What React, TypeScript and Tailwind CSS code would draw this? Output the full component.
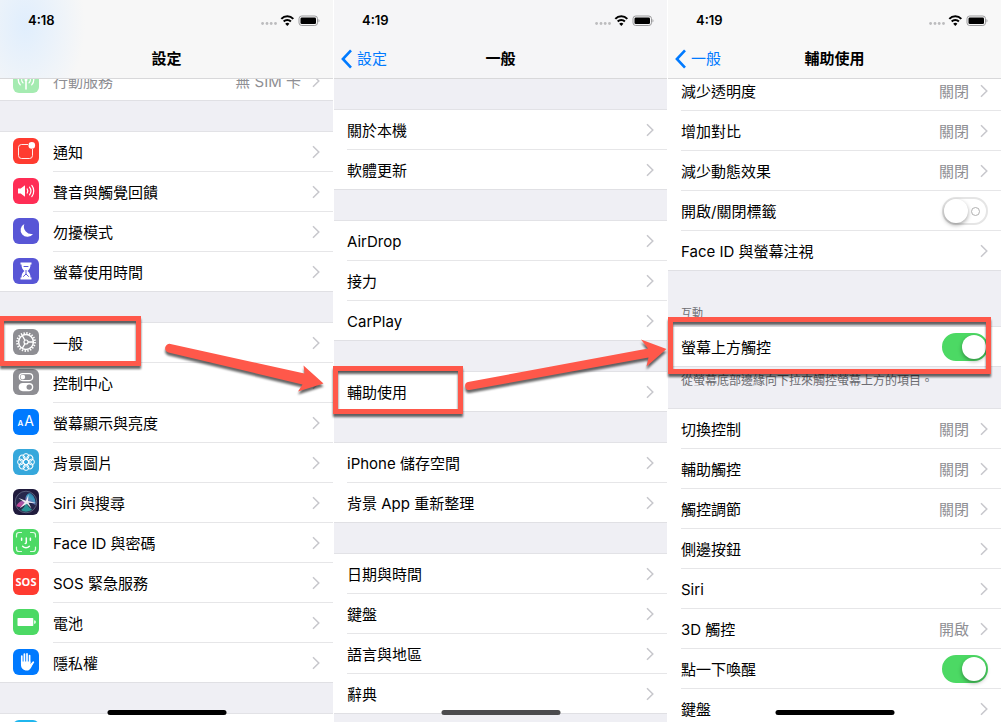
import type { ReactNode } from "react";

type Item = {
  label: string;
  value?: string;
  icon?: ReactNode;
  toggle?: boolean;
  muted?: boolean;
};

const tile = "mb-0.5 size-[26px] shrink-0 rounded-[6px] overflow-hidden text-white";

function Tile({ bg, children }: { bg: string; children?: ReactNode }) {
  return (
    <svg viewBox="0 0 26 26" className={`${tile} ${bg}`} fill="none" stroke="currentColor" aria-hidden="true">
      {children}
    </svg>
  );
}

const CellularIcon = (
  <Tile bg="bg-[#a5ebb1]">
    <g strokeWidth="1.3" strokeLinecap="round">
      <path d="M13 13v9" strokeWidth="1.6" />
      <path d="M10 9.5a4.6 4.6 0 0 0 0 6.4M16 9.5a4.6 4.6 0 0 1 0 6.4M7.3 7.5a7.6 7.6 0 0 0 0 10.4M18.7 7.5a7.6 7.6 0 0 1 0 10.4" />
    </g>
    <circle cx="13" cy="12.7" r="1.5" fill="currentColor" stroke="none" />
  </Tile>
);

const NotificationsIcon = (
  <Tile bg="bg-[#ff3b30]">
    <path d="M15 6.500H8.500a3 3 0 0 0-3 3v8a3 3 0 0 0 3 3h8a3 3 0 0 0 3-3V11" strokeWidth="0.9" />
    <circle cx="18.8" cy="7.4" r="3.3" fill="currentColor" stroke="none" />
  </Tile>
);

const SoundsIcon = (
  <Tile bg="bg-[#ff2d55]">
    <path d="M5 10.5h2.7l4.3-3.3v11.6l-4.3-3.3H5z" fill="currentColor" stroke="none" />
    <g strokeWidth="1.2" strokeLinecap="round">
      <path d="M14.200 11a3.6 3.6 0 0 1 0 4M16.500 9.200a6.2 6.2 0 0 1 0 7.600M18.800 7.400a9 9 0 0 1 0 11.200" />
    </g>
  </Tile>
);

const MoonIcon = (
  <Tile bg="bg-[#5856d6]">
    <path d="M11.300 6a6.8 6.8 0 1 0 8.700 9.900A7.600 7.600 0 0 1 11.300 6z" fill="currentColor" stroke="none" />
  </Tile>
);

const HourglassIcon = (
  <Tile bg="bg-[#5856d6]">
    <path d="M7.500 4.500h11v2h-1c0 3-.8 4.800-3 6.500 2.200 1.700 3 3.500 3 6.500h1v2h-11v-2h1c0-3 .8-4.800 3-6.500-2.200-1.700-3-3.500-3-6.500h-1z" fill="currentColor" stroke="none" />
    <path d="M10.600 8.500h4.800M13 12v4M10.200 18.700 13 16l2.800 2.700" stroke="#5856d6" strokeWidth="1" />
  </Tile>
);

const GearIcon = (
  <Tile bg="bg-[#8e8e93]">
    <circle cx="13" cy="13" r="9" strokeWidth="1.8" strokeDasharray="1.4 1.427" />
    <circle cx="13" cy="13" r="7.4" strokeWidth="1.5" />
    <circle cx="13" cy="13" r="2" strokeWidth="1.200" />
    <path d="M15 13h5.200M12 11.300 9.300 6.700M12 14.700l-2.700 4.600" strokeWidth="1.300" />
  </Tile>
);

const ControlCenterIcon = (
  <Tile bg="bg-[#8e8e93]">
    <rect x="6.3" y="4.600" width="13.400" height="7" rx="3.500" strokeWidth="1.200" />
    <circle cx="9.800" cy="8.100" r="2.400" fill="currentColor" stroke="none" />
    <rect x="5.700" y="14" width="14.600" height="8.200" rx="4.100" fill="currentColor" stroke="none" />
    <circle cx="16.200" cy="18.100" r="2.700" fill="#8e8e93" stroke="none" />
  </Tile>
);

const DisplayIcon = (
  <Tile bg="bg-[#007aff]">
    <g fill="currentColor" stroke="none" fontFamily="Inter, sans-serif">
      <text x="4.500" y="17" fontSize="8" fontWeight="600">A</text>
      <text x="11.200" y="17" fontSize="14">A</text>
    </g>
  </Tile>
);

const WallpaperIcon = (
  <Tile bg="bg-[#36a8dc]">
    <g strokeWidth="1">
      {[0, 45, 90, 135, 180, 225, 270, 315].map((angle) => (
        <circle key={angle} cx="13" cy="7.500" r="2.900" transform={`rotate(${angle} 13 13)`} />
      ))}
      <circle cx="13" cy="13" r="2.600" />
    </g>
  </Tile>
);

const SiriIcon = (
  <Tile bg="bg-[#201b3d]">
    <defs>
      <linearGradient id="siri-wave" x1="0" y1="1" x2="1" y2="0">
        <stop offset="0" stopColor="#f0459a" />
        <stop offset="0.45" stopColor="#a56bc4" />
        <stop offset="0.7" stopColor="#3fb0d4" />
        <stop offset="1" stopColor="#1f6a9a" />
      </linearGradient>
    </defs>
    <circle cx="13" cy="13" r="10.800" fill="#27284c" stroke="#7c879f" strokeWidth="0.600" />
    <path d="M3.500 17C5 13 9 10.500 13 13 11.500 9 13 5 17 4c4 2 6 7 5.500 12-3-2-6-3-9.500-3-3 5-6 6-9.500 4z" fill="url(#siri-wave)" stroke="none" opacity="0.850" />
    <path d="M13 13c1 3 3 6 6 7.500-3 2.500-8 3-11 .5 3-2 4.500-5 5-8z" fill="#2cb8ac" stroke="none" opacity="0.750" />
    <path d="M5.500 9 13 11.800 15.500 5.500 15 12l8 2-7.500-.3 3 5.800-4.700-4.700L6.500 19.500l5.200-6z" fill="#fff" stroke="none" opacity="0.900" />
  </Tile>
);

const FaceIdIcon = (
  <Tile bg="bg-[#4cd964]">
    <g strokeWidth="1.200" strokeLinecap="round">
      <path d="M3.500 8V6a2.500 2.500 0 0 1 2.500-2.500h2.500M17.500 3.500H20A2.500 2.500 0 0 1 22.500 6v2M22.500 18v2a2.500 2.500 0 0 1-2.500 2.500h-2.500M8.500 22.500H6A2.500 2.500 0 0 1 3.500 20v-2" opacity="0.850" />
      <path d="M8.600 9.300v2M17.400 9.300v2M13.300 9v4.600c0 .7-.4 1-1.100 1M9.600 17.200c1.900 2 4.900 2 6.800 0" strokeWidth="1.500" />
    </g>
  </Tile>
);

const SosIcon = (
  <Tile bg="bg-[#ff3b30]">
    <text x="13" y="17" fontSize="11" fontWeight="700" textAnchor="middle" fill="currentColor" stroke="none" fontFamily="Open Sans, sans-serif">SOS</text>
  </Tile>
);

const BatteryIcon = (
  <Tile bg="bg-[#4cd964]">
    <g fill="currentColor" stroke="none">
      <rect x="4.500" y="9" width="15.800" height="8" rx="0.800" />
      <path d="M21.200 11.200c1.200 0 1.600 1 1.600 1.800s-.4 1.800-1.600 1.800z" />
    </g>
  </Tile>
);

const PrivacyIcon = (
  <Tile bg="bg-[#007aff]">
    <g strokeLinecap="round" strokeWidth="1.700">
      <path d="M8.800 7v7M11.400 5v8M14 4.800v8M16.600 6.600V14" />
      <path d="M17.500 16.500l2.700-3.200" strokeWidth="1.900" />
    </g>
    <path d="M7.950 12.500h9.500v3l1.500-1.200 1 .9c-1.700 2.800-2.700 6.300-6 6.300-4 0-6-2.500-6-6z" fill="currentColor" stroke="none" />
  </Tile>
);

const settingsTop: Item[] = [{ label: "行動服務", value: "無 SIM 卡", icon: CellularIcon, muted: true }];

const settingsAlerts: Item[] = [
  { label: "通知", icon: NotificationsIcon },
  { label: "聲音與觸覺回饋", icon: SoundsIcon },
  { label: "勿擾模式", icon: MoonIcon },
  { label: "螢幕使用時間", icon: HourglassIcon },
];

const settingsMain: Item[] = [
  { label: "一般", icon: GearIcon },
  { label: "控制中心", icon: ControlCenterIcon },
  { label: "螢幕顯示與亮度", icon: DisplayIcon },
  { label: "背景圖片", icon: WallpaperIcon },
  { label: "Siri 與搜尋", icon: SiriIcon },
  { label: "Face ID 與密碼", icon: FaceIdIcon },
  { label: "SOS 緊急服務", icon: SosIcon },
  { label: "電池", icon: BatteryIcon },
  { label: "隱私權", icon: PrivacyIcon },
];

const generalGroups: Item[][] = [
  [{ label: "關於本機" }, { label: "軟體更新" }],
  [{ label: "AirDrop" }, { label: "接力" }, { label: "CarPlay" }],
  [{ label: "輔助使用" }],
  [{ label: "iPhone 儲存空間" }, { label: "背景 App 重新整理" }],
  [{ label: "日期與時間" }, { label: "鍵盤" }, { label: "語言與地區" }, { label: "辭典" }],
];

const visionItems: Item[] = [
  { label: "減少透明度", value: "關閉" },
  { label: "增加對比", value: "關閉" },
  { label: "減少動態效果", value: "關閉" },
  { label: "開啟/關閉標籤", toggle: false },
  { label: "Face ID 與螢幕注視" },
];

const touchItems: Item[] = [
  { label: "切換控制", value: "關閉" },
  { label: "輔助觸控", value: "關閉" },
  { label: "觸控調節", value: "關閉" },
  { label: "側邊按鈕" },
  { label: "Siri" },
  { label: "3D 觸控", value: "開啟" },
  { label: "點一下喚醒", toggle: true },
  { label: "鍵盤" },
];

function Chevron() {
  return (
    <svg viewBox="0 0 8 14" className="h-[14px] w-2 shrink-0 text-[#c7c7cc]" fill="none" stroke="currentColor" strokeWidth="1.5" aria-hidden="true">
      <path d="M1 1.2 6.8 7 1 12.8" />
    </svg>
  );
}

function Toggle({ on }: { on: boolean }) {
  return (
    <input
      type="checkbox"
      role="switch"
      defaultChecked={on}
      className="relative h-7 w-[46px] shrink-0 appearance-none rounded-full border-2 border-[#e5e5e5] bg-white before:absolute before:top-0 before:left-0 before:size-6 before:rounded-full before:bg-white before:shadow-[0_2px_4px_rgba(0,0,0,0.35)] after:absolute after:top-2 after:right-1.5 after:size-[9px] after:rounded-full after:border after:border-[#b0b0b0] checked:border-[#4cd964] checked:bg-[#4cd964] checked:before:left-[18px] checked:after:hidden"
    />
  );
}

function Row({ item, last }: { item: Item; last: boolean }) {
  const line = `flex h-full min-w-0 flex-1 items-center border-b ${last ? "border-transparent" : "border-[#e6e6e8]"}`;

  if (item.toggle !== undefined) {
    return (
      <li className="h-10 pl-[13px]">
        <label className={`${line} pr-[13px]`}>
          <span className="flex-1 pt-0.5">{item.label}</span>
          <Toggle on={item.toggle} />
        </label>
      </li>
    );
  }

  return (
    <li className="h-10">
      <a href="#" className={`flex h-full items-center pl-[13px] ${item.icon ? "gap-[14px]" : ""}`}>
        {item.icon}
        <span className={`${line} gap-[11px] pr-[13px]`}>
          <span className={`flex-1 pt-0.5 ${item.muted ? "text-[#8e8e93]" : ""}`}>{item.label}</span>
          {item.value && <span className="pt-0.5 text-[#8e8e93]">{item.value}</span>}
          <Chevron />
        </span>
      </a>
    </li>
  );
}

function Group({ items }: { items: Item[] }) {
  return (
    <ul className="bg-white shadow-[0_-1px_0_#e2e2e6,inset_0_-1px_0_#e0e0e4]">
      {items.map((item, index) => (
        <Row key={item.label} item={item} last={index === items.length - 1} />
      ))}
    </ul>
  );
}

function StatusBar({ time }: { time: string }) {
  return (
    <div className="flex h-10 items-center justify-between pr-[13px] pl-7">
      <span className="text-[13px] font-semibold">{time}</span>
      <svg viewBox="0 0 60 14" className="h-[14px] w-[60px]" aria-hidden="true">
        <g fill="#bcbcbe">
          <circle cx="2.6" cy="10.500" r="1.400" />
          <circle cx="7" cy="10.500" r="1.400" />
          <circle cx="11.200" cy="10.500" r="1.400" />
          <circle cx="15.500" cy="10.500" r="1.400" />
        </g>
        <g fill="none" stroke="#000" strokeWidth="2">
          <path d="M21.300 5.900a8.200 8.200 0 0 1 12 0" />
          <path d="M23.700 8.500a4.900 4.900 0 0 1 7.200 0" />
        </g>
        <path d="M27.300 13 25.200 10.700a3.100 3.100 0 0 1 4.200 0z" />
        <rect x="39" y="3" width="18.500" height="9.500" rx="2.700" fill="none" stroke="#9b9b9d" />
        <rect x="40.500" y="4.500" width="15.500" height="6.500" rx="1.300" />
        <path d="M58.500 6c1.300.5 1.300 3 0 3.500z" fill="#9b9b9d" />
      </svg>
    </div>
  );
}

type ScreenProps = {
  time: string;
  title: string;
  back?: string;
  headerClass: string;
  indicatorClass: string;
  children: ReactNode;
};

function Screen({ time, title, back, headerClass, indicatorClass, children }: ScreenProps) {
  return (
    <section className="relative flex h-screen min-w-0 flex-col overflow-hidden bg-[#efeff4]">
      <header className={`relative z-10 h-[79px] shrink-0 border-b border-[#d8d8da] ${headerClass}`}>
        <StatusBar time={time} />
        <div className="grid h-[38px] grid-cols-[1fr_auto_1fr] items-center">
          {back ? (
            <a href="#" className="flex items-center gap-[5px] pl-[7px] text-[#007aff]">
              <svg viewBox="0 0 11 20" className="h-5 w-[11px]" fill="none" stroke="currentColor" strokeWidth="2.600" aria-hidden="true">
                <path d="M10 1.300 1.900 10 10 18.700" />
              </svg>
              {back}
            </a>
          ) : (
            <span />
          )}
          <h1 className="font-semibold">{title}</h1>
        </div>
      </header>
      <div className="flex min-h-0 flex-1 flex-col">{children}</div>
      <div className={`absolute bottom-[7px] left-1/2 h-[5px] w-[119px] -translate-x-1/2 rounded-full ${indicatorClass}`} />
    </section>
  );
}

// Boxes and arrows that walk through 一般 → 輔助使用 → 螢幕上方觸控
function Annotations() {
  return (
    <svg viewBox="0 0 1001 722" className="pointer-events-none absolute top-0 left-0 z-20 h-[722px] w-[1001px] drop-shadow-[0px_3px_1px_rgba(0,0,0,0.6)]" aria-hidden="true">
      <g fill="none" stroke="#ff584a" strokeWidth="5">
        <rect x="1.500" y="318.500" width="137" height="45" />
        <rect x="335.500" y="368.500" width="125" height="43" />
        <rect x="670.500" y="319.500" width="318" height="52" />
      </g>
      <g fill="#ff584a">
        <path d="M170.500 344 304.500 373.500 303.500 365.500 323.500 383.500 298 391.500 302.500 384.500 168.500 352.500A4.300 4.300 0 0 1 170.500 344z" />
        <path d="M468 382 648 348.500 641 339.500 666.500 349 646.500 366.500 648.500 357.500 469.500 390A4.100 4.100 0 0 1 468 382z" />
      </g>
    </svg>
  );
}

export default function App() {
  return (
    <main className="relative grid grid-cols-3 gap-px overflow-hidden bg-white font-[Inter,'Noto_Sans_CJK_TC',sans-serif] text-[15px] leading-5 text-black">
      <Screen
        time="4:18"
        title="設定"
        headerClass="bg-[#f7f7f7] bg-[radial-gradient(ellipse_60px_90px_at_25px_25px,#e0eefd,transparent)]"
        indicatorClass="bg-black"
      >
        <div className="-mt-[18px] flex flex-col gap-[31px]">
          <Group items={settingsTop} />
          <Group items={settingsAlerts} />
          <Group items={settingsMain} />
          <Group items={[{ label: "", icon: <Tile bg="bg-[#1fb6ee]" /> }]} />
        </div>
      </Screen>

      <Screen time="4:19" title="一般" back="設定" headerClass="bg-[#f5f5f7]" indicatorClass="bg-[#4b4b4d]">
        <div className="flex flex-col gap-[31px] pt-[31px]">
          {generalGroups.map((items) => (
            <Group key={items[0].label} items={items} />
          ))}
        </div>
      </Screen>

      <Screen time="4:19" title="輔助使用" back="一般" headerClass="bg-[#f8f8f8]" indicatorClass="bg-black">
        <div className="-mt-2">
          <Group items={visionItems} />
          <h2 className="px-[13px] pt-8 pb-1 text-[11px] text-[#6d6d72]">互動</h2>
          <Group items={[{ label: "螢幕上方觸控", toggle: true }]} />
          <p className="px-[13px] pt-1 pb-[18px] text-[12px] text-[#6d6d72]">從螢幕底部邊緣向下拉來觸控螢幕上方的項目。</p>
          <Group items={touchItems} />
        </div>
      </Screen>

      <Annotations />
    </main>
  );
}
